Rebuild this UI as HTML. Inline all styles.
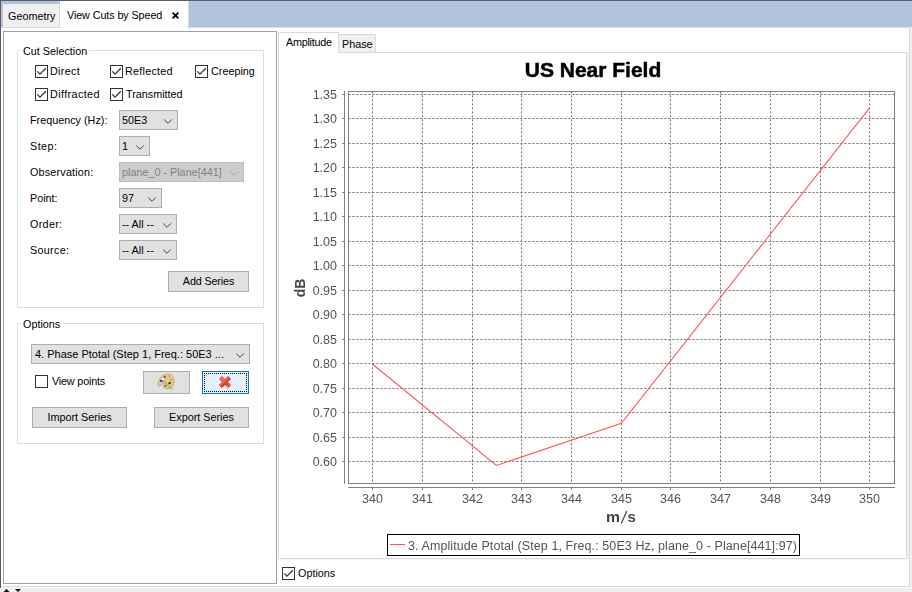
<!DOCTYPE html>
<html><head><meta charset="utf-8">
<style>
html,body{margin:0;padding:0;}
body{width:912px;height:592px;overflow:hidden;position:relative;background:#f0f0f0;font-family:"Liberation Sans",sans-serif;}
.a{position:absolute;box-sizing:border-box;}
.t{position:absolute;font-size:10.8px;line-height:13px;white-space:pre;color:#000;}
.cb{position:absolute;width:13px;height:13px;box-sizing:border-box;border:1px solid #333;background:#fff;}
.cb svg{position:absolute;left:-1px;top:-1px;}
.tk{font-family:"Liberation Sans";font-size:12.5px;fill:#545454;}
.ttl{font-family:"Liberation Sans";font-size:21px;font-weight:bold;fill:#000;stroke:#000;stroke-width:0.5px;}
.al{font-family:"Liberation Sans";font-size:14px;font-weight:bold;fill:#444;}
</style></head>
<body>
<div class="a" style="left:0px;top:0px;width:912px;height:1px;background:#5c5c5c"></div>
<div class="a" style="left:0px;top:0px;width:1px;height:588px;background:#5c5c5c"></div>
<div class="a" style="left:1px;top:587px;width:911px;height:1px;background:#fcfcfc"></div>
<div class="a" style="left:1px;top:1px;width:911px;height:26px;background:#b0c4de"></div>
<div class="a" style="left:1px;top:27px;width:909px;height:560px;background:#fff;border-right:1px solid #d9d9d9;border-bottom:1px solid #d9d9d9"></div>
<div class="a" style="left:1px;top:27px;width:908px;height:1px;background:#dadada"></div>
<div class="a" style="left:3px;top:4px;width:57px;height:24px;background:#f0f0f0;border-right:1px solid #d9d9d9;border-bottom:1px solid #d9d9d9"></div>
<div class="t" style="left:8px;top:10px;">Geometry</div>
<div class="a" style="left:60px;top:1px;width:129px;height:28px;background:#fff;border-right:1px solid #d9d9d9"></div>
<div class="t" style="left:67px;top:9px;letter-spacing:-0.1px">View Cuts by Speed</div>
<svg class="a" style="left:171px;top:11px" width="9" height="9" viewBox="0 0 9 9"><path d="M1.6 1.6L7.4 7.4M7.4 1.6L1.6 7.4" stroke="#000" stroke-width="1.7"/></svg>
<div class="a" style="left:3px;top:31px;width:274px;height:553px;border:1px solid #a0a0a0;background:#fff"></div>
<div class="a" style="left:17px;top:50px;width:247px;height:258px;border:1px solid #dcdcdc"></div>
<div class="a" style="left:21px;top:45px;width:68px;height:10px;background:#fff"></div>
<div class="t" style="left:23px;top:45px;">Cut Selection</div>
<div class="cb" style="left:35px;top:65px"><svg width="13" height="13" viewBox="0 0 13 13"><path d="M2.3 6.4L5 9.1L10.8 3.3" fill="none" stroke="#333" stroke-width="1.3"/></svg></div>
<div class="t" style="left:50px;top:65px;letter-spacing:0.3px">Direct</div>
<div class="cb" style="left:110px;top:65px"><svg width="13" height="13" viewBox="0 0 13 13"><path d="M2.3 6.4L5 9.1L10.8 3.3" fill="none" stroke="#333" stroke-width="1.3"/></svg></div>
<div class="t" style="left:125px;top:65px;letter-spacing:0.25px">Reflected</div>
<div class="cb" style="left:195px;top:65px"><svg width="13" height="13" viewBox="0 0 13 13"><path d="M2.3 6.4L5 9.1L10.8 3.3" fill="none" stroke="#333" stroke-width="1.3"/></svg></div>
<div class="t" style="left:211px;top:65px;">Creeping</div>
<div class="cb" style="left:35px;top:88px"><svg width="13" height="13" viewBox="0 0 13 13"><path d="M2.3 6.4L5 9.1L10.8 3.3" fill="none" stroke="#333" stroke-width="1.3"/></svg></div>
<div class="t" style="left:50px;top:88px;letter-spacing:0.39px">Diffracted</div>
<div class="cb" style="left:110px;top:88px"><svg width="13" height="13" viewBox="0 0 13 13"><path d="M2.3 6.4L5 9.1L10.8 3.3" fill="none" stroke="#333" stroke-width="1.3"/></svg></div>
<div class="t" style="left:126px;top:88px;">Transmitted</div>
<div class="t" style="left:30px;top:114px;">Frequency (Hz):</div>
<div class="a" style="left:119px;top:110px;width:59px;height:20px;border:1px solid #adadad;background:#e1e1e1"></div>
<div class="t" style="left:122px;top:114px;">50E3</div>
<svg class="a" style="left:164px;top:119px" width="9" height="6" viewBox="0 0 9 6"><path d="M0.2 0.5L4 4.3L7.8 0.5" fill="none" stroke="#404040" stroke-width="1"/></svg>
<div class="t" style="left:30px;top:140px;letter-spacing:0.45px">Step:</div>
<div class="a" style="left:119px;top:136px;width:31px;height:20px;border:1px solid #adadad;background:#e1e1e1"></div>
<div class="t" style="left:122px;top:140px;">1</div>
<svg class="a" style="left:136px;top:145px" width="9" height="6" viewBox="0 0 9 6"><path d="M0.2 0.5L4 4.3L7.8 0.5" fill="none" stroke="#404040" stroke-width="1"/></svg>
<div class="t" style="left:30px;top:166px;letter-spacing:0.18px">Observation:</div>
<div class="a" style="left:119px;top:162px;width:125px;height:20px;border:1px solid #bfbfbf;background:#cccccc"></div>
<div class="t" style="left:122px;top:166px;color:#838383;">plane_0 - Plane[441]</div>
<svg class="a" style="left:230px;top:171px" width="9" height="6" viewBox="0 0 9 6"><path d="M0.2 0.5L4 4.3L7.8 0.5" fill="none" stroke="#a8a8a8" stroke-width="1"/></svg>
<div class="t" style="left:30px;top:192px;">Point:</div>
<div class="a" style="left:119px;top:188px;width:43px;height:20px;border:1px solid #adadad;background:#e1e1e1"></div>
<div class="t" style="left:122px;top:192px;">97</div>
<svg class="a" style="left:148px;top:197px" width="9" height="6" viewBox="0 0 9 6"><path d="M0.2 0.5L4 4.3L7.8 0.5" fill="none" stroke="#404040" stroke-width="1"/></svg>
<div class="t" style="left:30px;top:218px;letter-spacing:0.3px">Order:</div>
<div class="a" style="left:119px;top:214px;width:58px;height:20px;border:1px solid #adadad;background:#e1e1e1"></div>
<div class="t" style="left:122px;top:218px;">-- All --</div>
<svg class="a" style="left:163px;top:223px" width="9" height="6" viewBox="0 0 9 6"><path d="M0.2 0.5L4 4.3L7.8 0.5" fill="none" stroke="#404040" stroke-width="1"/></svg>
<div class="t" style="left:30px;top:244px;letter-spacing:0.3px">Source:</div>
<div class="a" style="left:119px;top:240px;width:58px;height:20px;border:1px solid #adadad;background:#e1e1e1"></div>
<div class="t" style="left:122px;top:244px;">-- All --</div>
<svg class="a" style="left:163px;top:249px" width="9" height="6" viewBox="0 0 9 6"><path d="M0.2 0.5L4 4.3L7.8 0.5" fill="none" stroke="#404040" stroke-width="1"/></svg>
<div class="a" style="left:168px;top:271px;width:81px;height:21px;border:1px solid #adadad;background:#e1e1e1"></div>
<div class="t" style="left:168px;top:275px;width:81px;text-align:center;letter-spacing:-0.15px">Add Series</div>
<div class="a" style="left:17px;top:323px;width:247px;height:121px;border:1px solid #dcdcdc"></div>
<div class="a" style="left:21px;top:318px;width:42px;height:10px;background:#fff"></div>
<div class="t" style="left:23px;top:318px;">Options</div>
<div class="a" style="left:31px;top:344px;width:219px;height:20px;border:1px solid #adadad;background:#e1e1e1"></div>
<div class="t" style="left:35px;top:348px;font-size:11px">4. Phase Ptotal (Step 1, Freq.: 50E3 ...</div>
<svg class="a" style="left:236px;top:353px" width="9" height="6" viewBox="0 0 9 6"><path d="M0.2 0.5L4 4.3L7.8 0.5" fill="none" stroke="#404040" stroke-width="1"/></svg>
<div class="cb" style="left:35px;top:375px"></div>
<div class="t" style="left:52px;top:375px;letter-spacing:-0.18px">View points</div>
<div class="a" style="left:143px;top:371px;width:47px;height:23px;border:1px solid #adadad;background:#e1e1e1"></div>
<div class="a" style="left:32px;top:407px;width:95px;height:21px;border:1px solid #adadad;background:#e1e1e1"></div>
<div class="t" style="left:32px;top:411px;width:95px;text-align:center;">Import Series</div>
<div class="a" style="left:154px;top:407px;width:95px;height:21px;border:1px solid #adadad;background:#e1e1e1"></div>
<div class="t" style="left:154px;top:411px;width:95px;text-align:center;">Export Series</div>
<div class="a" style="left:202px;top:371px;width:47px;height:23px;border:1px solid #0078d7;background:#e5f1fb"></div>
<div class="a" style="left:204px;top:373px;width:43px;height:19px;border:1px dotted #000"></div>
<svg class="a" style="left:155px;top:372px" width="22" height="20" viewBox="155 372 22 20">
<path d="M162.8 382.6 C161.5 383.5 161 385.5 159.8 386.3 C158.5 386.8 157.8 385.2 158 383.5 C158.3 380.5 160 377.8 162.8 375.8 C165.5 374 169 373.7 171.5 375.2 C173.8 376.8 174.6 380 174 383 C173.3 386.2 170.8 388.6 167.5 388.8 C164.8 389 163.2 387.5 163.3 385.6 C163.4 384.3 163.8 383.4 162.8 382.6 Z" fill="#e6c98f" stroke="#c49a5a" stroke-width="0.8"/>
<circle cx="164.8" cy="376.9" r="1.1" fill="#c0303a"/>
<circle cx="169.2" cy="376.5" r="1.2" fill="#b8b8b8"/>
<circle cx="171.2" cy="380" r="1.2" fill="#c8a818"/>
<circle cx="169.6" cy="383.2" r="1.1" fill="#111"/>
<circle cx="165.6" cy="386" r="1.05" fill="#1a8a2a"/>
<line x1="162.5" y1="380" x2="172.5" y2="389.5" stroke="#7a6a60" stroke-width="0.7"/>
<circle cx="162.8" cy="379.3" r="1.2" fill="#f4f4f4"/>
<circle cx="161.3" cy="380.9" r="1.2" fill="#1530b0"/>
</svg>
<svg class="a" style="left:219px;top:376px" width="12" height="12" viewBox="0 0 12 12">
<defs><linearGradient id="rx" x1="0" y1="0" x2="1" y2="1"><stop offset="0" stop-color="#e08080"/><stop offset="0.45" stop-color="#e86060"/><stop offset="0.55" stop-color="#e83a10"/><stop offset="1" stop-color="#f07840"/></linearGradient></defs>
<path d="M0.2 2.9 L2.9 0.2 L6 3.3 L9.1 0.2 L11.8 2.9 L8.7 6 L11.8 9.1 L9.1 11.8 L6 8.7 L2.9 11.8 L0.2 9.1 L3.3 6 Z" fill="url(#rx)" stroke="#b84040" stroke-width="0.5" stroke-linejoin="round"/>
</svg>
<svg class="a" style="left:0;top:586px" width="40" height="6" viewBox="0 586 40 6">
<path d="M3.5 592 L6.5 589 L9.5 592 Z" fill="#000"/>
<path d="M15 589 L21 589 L18 592 Z" fill="#000"/>
</svg>
<div class="a" style="left:278px;top:52px;width:629px;height:507px;border:1px solid #d9d9d9;background:#fff"></div>
<div class="a" style="left:907px;top:52px;width:2px;height:507px;background:#f0f0f0"></div>
<div class="a" style="left:278px;top:559px;width:631px;height:1px;background:#f6f6f6"></div>
<div class="a" style="left:278px;top:32px;width:61px;height:21px;border:1px solid #d9d9d9;border-bottom:none;background:#fff"></div>
<div class="t" style="left:286px;top:36px;letter-spacing:-0.25px">Amplitude</div>
<div class="a" style="left:338px;top:34px;width:38px;height:19px;border:1px solid #d9d9d9;background:#f0f0f0"></div>
<div class="t" style="left:342px;top:38px;">Phase</div>
<div class="cb" style="left:282px;top:567px"><svg width="13" height="13" viewBox="0 0 13 13"><path d="M2.3 6.4L5 9.1L10.8 3.3" fill="none" stroke="#333" stroke-width="1.3"/></svg></div>
<div class="t" style="left:298px;top:567px;">Options</div>
<svg class="a" style="left:0;top:0;will-change:transform" width="912" height="592" viewBox="0 0 912 592"><line x1="348.4" y1="94.5" x2="894" y2="94.5" stroke="#707070" stroke-width="1" stroke-dasharray="2 2"/><line x1="348.4" y1="118.5" x2="894" y2="118.5" stroke="#707070" stroke-width="1" stroke-dasharray="2 2"/><line x1="348.4" y1="143.5" x2="894" y2="143.5" stroke="#707070" stroke-width="1" stroke-dasharray="2 2"/><line x1="348.4" y1="167.5" x2="894" y2="167.5" stroke="#707070" stroke-width="1" stroke-dasharray="2 2"/><line x1="348.4" y1="192.5" x2="894" y2="192.5" stroke="#707070" stroke-width="1" stroke-dasharray="2 2"/><line x1="348.4" y1="216.5" x2="894" y2="216.5" stroke="#707070" stroke-width="1" stroke-dasharray="2 2"/><line x1="348.4" y1="241.5" x2="894" y2="241.5" stroke="#707070" stroke-width="1" stroke-dasharray="2 2"/><line x1="348.4" y1="265.5" x2="894" y2="265.5" stroke="#707070" stroke-width="1" stroke-dasharray="2 2"/><line x1="348.4" y1="290.5" x2="894" y2="290.5" stroke="#707070" stroke-width="1" stroke-dasharray="2 2"/><line x1="348.4" y1="314.5" x2="894" y2="314.5" stroke="#707070" stroke-width="1" stroke-dasharray="2 2"/><line x1="348.4" y1="339.5" x2="894" y2="339.5" stroke="#707070" stroke-width="1" stroke-dasharray="2 2"/><line x1="348.4" y1="363.5" x2="894" y2="363.5" stroke="#707070" stroke-width="1" stroke-dasharray="2 2"/><line x1="348.4" y1="388.5" x2="894" y2="388.5" stroke="#707070" stroke-width="1" stroke-dasharray="2 2"/><line x1="348.4" y1="412.5" x2="894" y2="412.5" stroke="#707070" stroke-width="1" stroke-dasharray="2 2"/><line x1="348.4" y1="437.5" x2="894" y2="437.5" stroke="#707070" stroke-width="1" stroke-dasharray="2 2"/><line x1="348.4" y1="461.5" x2="894" y2="461.5" stroke="#707070" stroke-width="1" stroke-dasharray="2 2"/><line x1="372.5" y1="91.4" x2="372.5" y2="483" stroke="#707070" stroke-width="1" stroke-dasharray="2 2"/><line x1="422.5" y1="91.4" x2="422.5" y2="483" stroke="#707070" stroke-width="1" stroke-dasharray="2 2"/><line x1="472.5" y1="91.4" x2="472.5" y2="483" stroke="#707070" stroke-width="1" stroke-dasharray="2 2"/><line x1="521.5" y1="91.4" x2="521.5" y2="483" stroke="#707070" stroke-width="1" stroke-dasharray="2 2"/><line x1="571.5" y1="91.4" x2="571.5" y2="483" stroke="#707070" stroke-width="1" stroke-dasharray="2 2"/><line x1="621.5" y1="91.4" x2="621.5" y2="483" stroke="#707070" stroke-width="1" stroke-dasharray="2 2"/><line x1="670.5" y1="91.4" x2="670.5" y2="483" stroke="#707070" stroke-width="1" stroke-dasharray="2 2"/><line x1="720.5" y1="91.4" x2="720.5" y2="483" stroke="#707070" stroke-width="1" stroke-dasharray="2 2"/><line x1="770.5" y1="91.4" x2="770.5" y2="483" stroke="#707070" stroke-width="1" stroke-dasharray="2 2"/><line x1="820.5" y1="91.4" x2="820.5" y2="483" stroke="#707070" stroke-width="1" stroke-dasharray="2 2"/><line x1="869.5" y1="91.4" x2="869.5" y2="483" stroke="#707070" stroke-width="1" stroke-dasharray="2 2"/><rect x="348.5" y="91.5" width="546" height="392" fill="none" stroke="#808080" stroke-width="1"/><line x1="344.5" y1="91" x2="344.5" y2="484" stroke="#808080" stroke-width="1" /><line x1="348" y1="487.5" x2="895" y2="487.5" stroke="#808080" stroke-width="1" /><line x1="342" y1="94.5" x2="344" y2="94.5" stroke="#808080" stroke-width="1" /><text x="337" y="99" text-anchor="end" class="tk">1.35</text><line x1="342" y1="118.5" x2="344" y2="118.5" stroke="#808080" stroke-width="1" /><text x="337" y="123" text-anchor="end" class="tk">1.30</text><line x1="342" y1="143.5" x2="344" y2="143.5" stroke="#808080" stroke-width="1" /><text x="337" y="148" text-anchor="end" class="tk">1.25</text><line x1="342" y1="167.5" x2="344" y2="167.5" stroke="#808080" stroke-width="1" /><text x="337" y="172" text-anchor="end" class="tk">1.20</text><line x1="342" y1="192.5" x2="344" y2="192.5" stroke="#808080" stroke-width="1" /><text x="337" y="197" text-anchor="end" class="tk">1.15</text><line x1="342" y1="216.5" x2="344" y2="216.5" stroke="#808080" stroke-width="1" /><text x="337" y="221" text-anchor="end" class="tk">1.10</text><line x1="342" y1="241.5" x2="344" y2="241.5" stroke="#808080" stroke-width="1" /><text x="337" y="246" text-anchor="end" class="tk">1.05</text><line x1="342" y1="265.5" x2="344" y2="265.5" stroke="#808080" stroke-width="1" /><text x="337" y="270" text-anchor="end" class="tk">1.00</text><line x1="342" y1="290.5" x2="344" y2="290.5" stroke="#808080" stroke-width="1" /><text x="337" y="295" text-anchor="end" class="tk">0.95</text><line x1="342" y1="314.5" x2="344" y2="314.5" stroke="#808080" stroke-width="1" /><text x="337" y="319" text-anchor="end" class="tk">0.90</text><line x1="342" y1="339.5" x2="344" y2="339.5" stroke="#808080" stroke-width="1" /><text x="337" y="344" text-anchor="end" class="tk">0.85</text><line x1="342" y1="363.5" x2="344" y2="363.5" stroke="#808080" stroke-width="1" /><text x="337" y="368" text-anchor="end" class="tk">0.80</text><line x1="342" y1="388.5" x2="344" y2="388.5" stroke="#808080" stroke-width="1" /><text x="337" y="393" text-anchor="end" class="tk">0.75</text><line x1="342" y1="412.5" x2="344" y2="412.5" stroke="#808080" stroke-width="1" /><text x="337" y="417" text-anchor="end" class="tk">0.70</text><line x1="342" y1="437.5" x2="344" y2="437.5" stroke="#808080" stroke-width="1" /><text x="337" y="442" text-anchor="end" class="tk">0.65</text><line x1="342" y1="461.5" x2="344" y2="461.5" stroke="#808080" stroke-width="1" /><text x="337" y="466" text-anchor="end" class="tk">0.60</text><line x1="372.5" y1="488" x2="372.5" y2="490" stroke="#808080" stroke-width="1" /><text x="372.5" y="503" text-anchor="middle" class="tk">340</text><line x1="422.5" y1="488" x2="422.5" y2="490" stroke="#808080" stroke-width="1" /><text x="422.5" y="503" text-anchor="middle" class="tk">341</text><line x1="472.5" y1="488" x2="472.5" y2="490" stroke="#808080" stroke-width="1" /><text x="472.5" y="503" text-anchor="middle" class="tk">342</text><line x1="521.5" y1="488" x2="521.5" y2="490" stroke="#808080" stroke-width="1" /><text x="521.5" y="503" text-anchor="middle" class="tk">343</text><line x1="571.5" y1="488" x2="571.5" y2="490" stroke="#808080" stroke-width="1" /><text x="571.5" y="503" text-anchor="middle" class="tk">344</text><line x1="621.5" y1="488" x2="621.5" y2="490" stroke="#808080" stroke-width="1" /><text x="621.5" y="503" text-anchor="middle" class="tk">345</text><line x1="670.5" y1="488" x2="670.5" y2="490" stroke="#808080" stroke-width="1" /><text x="670.5" y="503" text-anchor="middle" class="tk">346</text><line x1="720.5" y1="488" x2="720.5" y2="490" stroke="#808080" stroke-width="1" /><text x="720.5" y="503" text-anchor="middle" class="tk">347</text><line x1="770.5" y1="488" x2="770.5" y2="490" stroke="#808080" stroke-width="1" /><text x="770.5" y="503" text-anchor="middle" class="tk">348</text><line x1="820.5" y1="488" x2="820.5" y2="490" stroke="#808080" stroke-width="1" /><text x="820.5" y="503" text-anchor="middle" class="tk">349</text><line x1="869.5" y1="488" x2="869.5" y2="490" stroke="#808080" stroke-width="1" /><text x="869.5" y="503" text-anchor="middle" class="tk">350</text><polyline points="372.0,363.7 496.4,465.4 621.4,423.3 869.4,108.2" fill="none" stroke="#ff5555" stroke-width="1.1"/><text x="593" y="77" text-anchor="middle" class="ttl">US Near Field</text><text x="606" y="522" class="al" style="font-size:15px" textLength="14" lengthAdjust="spacingAndGlyphs">m</text><line x1="621.3" y1="523.6" x2="626.8" y2="511" stroke="#444" stroke-width="1.2"/><text x="627.5" y="522" class="al" style="font-size:15px">s</text><text transform="translate(305,288) rotate(-90)" x="0" y="0" text-anchor="middle" class="al">dB</text><rect x="387.5" y="534.5" width="412" height="21" fill="#fff" stroke="#000" stroke-width="1"/><line x1="390" y1="544.5" x2="405" y2="544.5" stroke="#ff5555" stroke-width="1" /><text x="408" y="550" class="tk" letter-spacing="0.09">3. Amplitude Ptotal (Step 1, Freq.: 50E3 Hz, plane_0 - Plane[441]:97)</text></svg>
</body></html>
